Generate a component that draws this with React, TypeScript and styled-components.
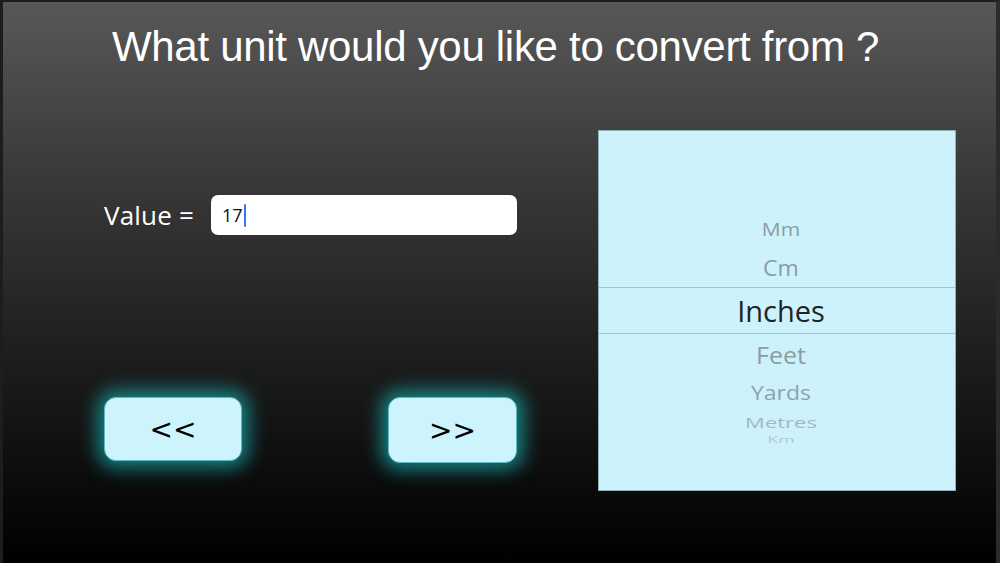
import React from "react";
import styled, { createGlobalStyle } from "styled-components";

const GlobalStyle = createGlobalStyle`
  html, body {
    margin: 0;
    padding: 0;
    background: #000;
  }
  * {
    box-sizing: border-box;
  }
`;

// 전체 화면 틀
const Screen = styled.div`
  width: 1000px;
  height: 563px;
  display: flex;
  flex-direction: column;
  border-left: 3px solid #1d1d1d;
  border-top: 2px solid #1d1d1d;
  border-right: 4px solid #2b2b2b;
  background: linear-gradient(180deg, #585858 0%, #3a3a3a 30%, #1c1c1c 65%, #000 100%);
  font-family: "Liberation Sans", Arial, sans-serif;
  overflow: hidden;
`;

const Title = styled.h1`
  margin: 0;
  padding: 21px 8px 0 0;
  height: 70px;
  text-align: center;
  font-size: 42px;
  line-height: 48px;
  font-weight: 400;
  color: #fff;
  letter-spacing: -0.3px;
`;

const Main = styled.div`
  display: flex;
  gap: 81px;
  margin-top: 58px;
  padding-left: 101px;
`;

const LeftColumn = styled.div`
  width: 413px;
  display: flex;
  flex-direction: column;
`;

const ValueRow = styled.div`
  display: flex;
  align-items: center;
  gap: 17px;
  margin-top: 65px;
  height: 40px;
`;

const Label = styled.span`
  font-size: 26px;
  color: #fff;
  font-family: "Open Sans", "Liberation Sans", sans-serif;
  letter-spacing: 0.2px;
`;

const Field = styled.div`
  flex: 1;
  height: 40px;
  background: #fff;
  border-radius: 7px;
  display: flex;
  align-items: center;
  padding-left: 11px;
  font-size: 18px;
  color: #111;
  font-family: "Open Sans", "Liberation Sans", sans-serif;
`;

const Caret = styled.span`
  display: inline-block;
  width: 2px;
  height: 23px;
  margin-left: 1px;
  background: #3a72f0;
  border-radius: 1px;
`;

const ButtonRow = styled.div`
  display: flex;
  justify-content: space-between;
  align-items: flex-start;
  margin-top: 162px;
`;

type NavProps = { $w: number; $h: number };
const NavButton = styled.button<NavProps>`
  width: ${(p) => p.$w}px;
  height: ${(p) => p.$h}px;
  border: 1px solid #5fb8c0;
  border-radius: 12px;
  background: #cdf3fd;
  box-shadow: 0 0 18px 7px rgba(24, 176, 178, 0.7);
  font-size: 28px;
  font-family: "DejaVu Sans", "Liberation Sans", sans-serif;
  color: #000;
  padding: 0;
  cursor: pointer;
`;

// 단위 선택 휠
const Picker = styled.div`
  width: 358px;
  height: 361px;
  background: #cdf2fc;
  border: 1px solid #8fb3bb;
  display: flex;
  flex-direction: column;
  padding-top: 79px;
  font-family: "Open Sans", "Liberation Sans", sans-serif;
`;

type ItemProps = {
  $h: number;
  $size: number;
  $color: string;
  $squash: number;
  $selected?: boolean;
};
const WheelItem = styled.div<ItemProps>`
  height: ${(p) => p.$h}px;
  flex-shrink: 0;
  display: flex;
  align-items: center;
  justify-content: center;
  padding-left: 8px;
  overflow: hidden;
  font-size: ${(p) => p.$size}px;
  color: ${(p) => p.$color};
  border-top: ${(p) => (p.$selected ? "1px solid #a3c4cb" : "none")};
  border-bottom: ${(p) => (p.$selected ? "1px solid #a3c4cb" : "none")};
  span {
    display: inline-block;
    transform: scaleY(${(p) => p.$squash});
  }
`;

const units = [
  { name: "Mm", h: 38, size: 21, color: "#8a9ea4", squash: 0.85 },
  { name: "Cm", h: 39, size: 23, color: "#899da3", squash: 0.92 },
  { name: "Inches", h: 47, size: 29, color: "#1f2426", squash: 1, selected: true },
  { name: "Feet", h: 40, size: 25, color: "#899da3", squash: 0.95 },
  { name: "Yards", h: 36, size: 23, color: "#8fa3a9", squash: 0.88 },
  { name: "Metres", h: 23, size: 22, color: "#a2b8be", squash: 0.65 },
  { name: "Km", h: 14, size: 18, color: "#b3c9cf", squash: 0.45 },
];

export default function App() {
  return (
    <>
      <GlobalStyle />
      <Screen>
        <Title>What unit would you like to convert from ?</Title>
        <Main>
          <LeftColumn>
            <ValueRow>
              <Label>Value =</Label>
              <Field>
                17
                <Caret />
              </Field>
            </ValueRow>
            <ButtonRow>
              <NavButton $w={138} $h={64}>&lt;&lt;</NavButton>
              <NavButton $w={129} $h={66}>&gt;&gt;</NavButton>
            </ButtonRow>
          </LeftColumn>
          <Picker>
            {units.map((u) => (
              <WheelItem
                key={u.name}
                $h={u.h}
                $size={u.size}
                $color={u.color}
                $squash={u.squash}
                $selected={u.selected}
              >
                <span>{u.name}</span>
              </WheelItem>
            ))}
          </Picker>
        </Main>
      </Screen>
    </>
  );
}
